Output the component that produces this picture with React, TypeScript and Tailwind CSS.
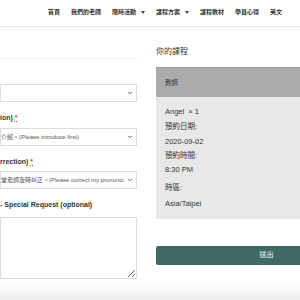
import { ChevronDown } from 'lucide-react';

const navItems = [
  { label: '首頁' },
  { label: '我們的老師' },
  { label: '限時活動', menu: true },
  { label: '課程方案', menu: true },
  { label: '課程教材' },
  { label: '學員心得' },
  { label: '英文' },
];

function Caret() {
  return <span className="ml-[5px] inline-block h-0 w-0 border-x-[2px] border-t-[3px] border-x-transparent border-t-[#444]" />;
}

function FakeSelect({ value }: { value: string }) {
  return (
    <div className="flex h-[18px] items-center border border-[#dddddd] bg-white pr-[3px]">
      <span className="min-w-0 flex-1 overflow-hidden whitespace-nowrap text-[6px] leading-[8px] text-[#555]">{value}</span>
      <ChevronDown size={6} strokeWidth={3} className="ml-[3px] shrink-0 text-[#333]" />
    </div>
  );
}

function Label({ text }: { text: string }) {
  return (
    <div className="h-[10px] whitespace-nowrap text-[7px] font-bold leading-[10px] text-[#333]">
      {text}{' '}
      <abbr className="text-[#e2401c] underline decoration-dotted">*</abbr>
    </div>
  );
}

export default function App() {
  return (
    <div className="flex h-[300px] w-[300px] flex-col overflow-hidden bg-white font-['Liberation_Sans','Noto_Sans_CJK_TC',sans-serif]">
      <header className="h-[27px] shrink-0 border-b border-[#e6e6e6] shadow-[0_1px_3px_rgba(0,0,0,0.05)]">
        <nav className="flex gap-[11px] whitespace-nowrap pl-[48px] pt-[9px] text-[6px] font-bold leading-[7px] text-[#333]">
          {navItems.map((item) => (
            <span key={item.label} className="flex shrink-0 items-center">
              {item.label}
              {item.menu && <Caret />}
            </span>
          ))}
        </nav>
      </header>

      <main className="flex min-h-0 flex-1">
        <section className="w-[137px] shrink-0">
          <div className="mt-[31px] border-t border-[#eeeeee]" />
          <div className="mt-[25px]">
            <FakeSelect value="" />
          </div>
          <div className="mt-[11px]">
            <Label text="ion)" />
          </div>
          <div className="mt-[5px]">
            <FakeSelect value="介紹。(Please introduce first)" />
          </div>
          <div className="mt-[11px]">
            <Label text="rrection)" />
          </div>
          <div className="mt-[4px]">
            <FakeSelect value="堂老師及時糾正。(Please correct my pronunciation)" />
          </div>
          <div className="mt-[11px] h-[10px] whitespace-nowrap text-[7px] font-bold leading-[10px] text-[#333]">
            - Special Request (optional)
          </div>
          <textarea
            readOnly
            className="mt-[7px] block h-[62px] w-full border border-[#dddddd] bg-white outline-none"
          />
        </section>

        <aside className="ml-[19px] w-[221px] shrink-0">
          <h3 className="mt-[20px] text-[8px] leading-[10px] text-[#333]">你的課程</h3>
          <div className="mt-[10px] border-t border-[#9a9a9a]">
            <div className="flex h-[29px] items-center bg-[#ababab] pl-[9px] text-[6.5px] text-[#333]">教師</div>
            <div className="h-[122px] bg-[#e8e8e8] px-[9px] pt-[10px] text-[7.5px] leading-[9px] text-[#333]">
              <p>Angel &nbsp;× 1</p>
              <p className="mt-[6px]">預約日期:</p>
              <p className="mt-[6px]">2020-09-02</p>
              <p className="mt-[5px]">預約時間:</p>
              <p className="mt-[5px]">8:30 PM</p>
              <p className="mt-[9px]">時區:</p>
              <p className="mt-[7px]">Asia/Taipei</p>
            </div>
          </div>
          <button
            type="button"
            className="mt-[27px] h-[19px] w-full rounded-[2px] bg-[#3e6965] text-[7px] text-white"
          >
            送出
          </button>
        </aside>
      </main>

      <footer className="h-[15px] shrink-0 bg-gradient-to-b from-white to-[#ececec]" />
    </div>
  );
}
